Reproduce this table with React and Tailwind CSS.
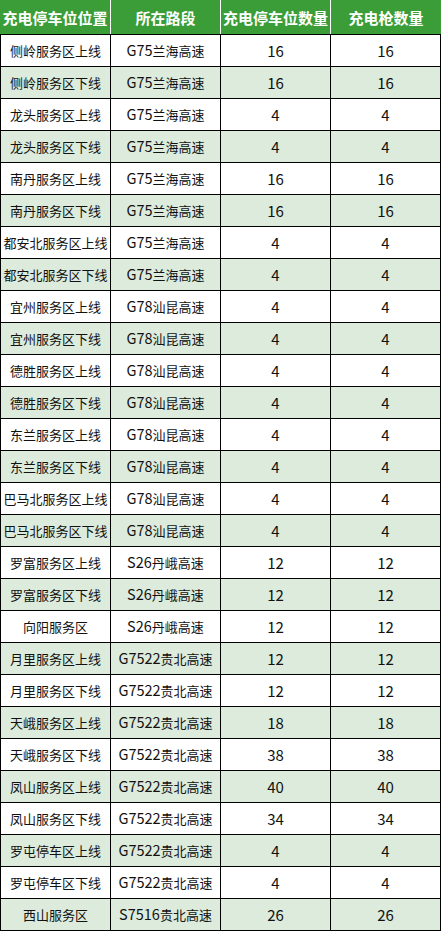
import React from "react";

const rows = [
  ["侧岭服务区上线", "G75兰海高速", 16, 16],
  ["侧岭服务区下线", "G75兰海高速", 16, 16],
  ["龙头服务区上线", "G75兰海高速", 4, 4],
  ["龙头服务区下线", "G75兰海高速", 4, 4],
  ["南丹服务区上线", "G75兰海高速", 16, 16],
  ["南丹服务区下线", "G75兰海高速", 16, 16],
  ["都安北服务区上线", "G75兰海高速", 4, 4],
  ["都安北服务区下线", "G75兰海高速", 4, 4],
  ["宜州服务区上线", "G78汕昆高速", 4, 4],
  ["宜州服务区下线", "G78汕昆高速", 4, 4],
  ["德胜服务区上线", "G78汕昆高速", 4, 4],
  ["德胜服务区下线", "G78汕昆高速", 4, 4],
  ["东兰服务区上线", "G78汕昆高速", 4, 4],
  ["东兰服务区下线", "G78汕昆高速", 4, 4],
  ["巴马北服务区上线", "G78汕昆高速", 4, 4],
  ["巴马北服务区下线", "G78汕昆高速", 4, 4],
  ["罗富服务区上线", "S26丹峨高速", 12, 12],
  ["罗富服务区下线", "S26丹峨高速", 12, 12],
  ["向阳服务区", "S26丹峨高速", 12, 12],
  ["月里服务区上线", "G7522贵北高速", 12, 12],
  ["月里服务区下线", "G7522贵北高速", 12, 12],
  ["天峨服务区上线", "G7522贵北高速", 18, 18],
  ["天峨服务区下线", "G7522贵北高速", 38, 38],
  ["凤山服务区上线", "G7522贵北高速", 40, 40],
  ["凤山服务区下线", "G7522贵北高速", 34, 34],
  ["罗屯停车区上线", "G7522贵北高速", 4, 4],
  ["罗屯停车区下线", "G7522贵北高速", 4, 4],
  ["西山服务区", "S7516贵北高速", 26, 26],
];

const headers = ["充电停车位位置", "所在路段", "充电停车位数量", "充电枪数量"];

const font = { fontFamily: '"Noto Sans CJK SC", "Noto Sans", sans-serif' };

// road code (G75 etc.) is drawn a bit larger than the Chinese part
const Road = ({ text }) => {
  const m = text.match(/^([A-Z0-9]+)(.*)$/);
  return (
    <span>
      <span className="text-[14.5px]">{m[1]}</span>
      {m[2]}
    </span>
  );
};

export default function App() {
  return (
    <div className="w-[441px] bg-white" style={font}>
      {/* header */}
      <div className="grid h-[34px] grid-cols-[110px_110px_110px_111px] bg-[#3b9d37] text-[15px] font-bold text-white">
        {headers.map((h, i) => (
          <div
            key={h}
            className={`flex items-center justify-center whitespace-nowrap leading-none ${
              i > 0 ? "border-l border-white" : ""
            }`}
          >
            {h}
          </div>
        ))}
      </div>

      {/* body */}
      <div className="border-b border-black">
        {rows.map((r, idx) => (
          <div
            key={r[0]}
            className={`grid h-[32px] grid-cols-[110px_110px_110px_111px] border-t border-black text-[13px] text-[#111] ${
              idx % 2 === 1 ? "bg-[#dcebdc]" : "bg-white"
            }`}
          >
            <div className="flex items-center justify-center whitespace-nowrap border-l border-black leading-none">
              {r[0]}
            </div>
            <div className="flex items-center justify-center whitespace-nowrap border-l border-black leading-none">
              <Road text={r[1]} />
            </div>
            <div className="flex items-center justify-center border-l border-black text-[15px] leading-none">
              {r[2]}
            </div>
            <div className="flex items-center justify-center border-x border-black text-[15px] leading-none">
              {r[3]}
            </div>
          </div>
        ))}
      </div>
    </div>
  );
}
